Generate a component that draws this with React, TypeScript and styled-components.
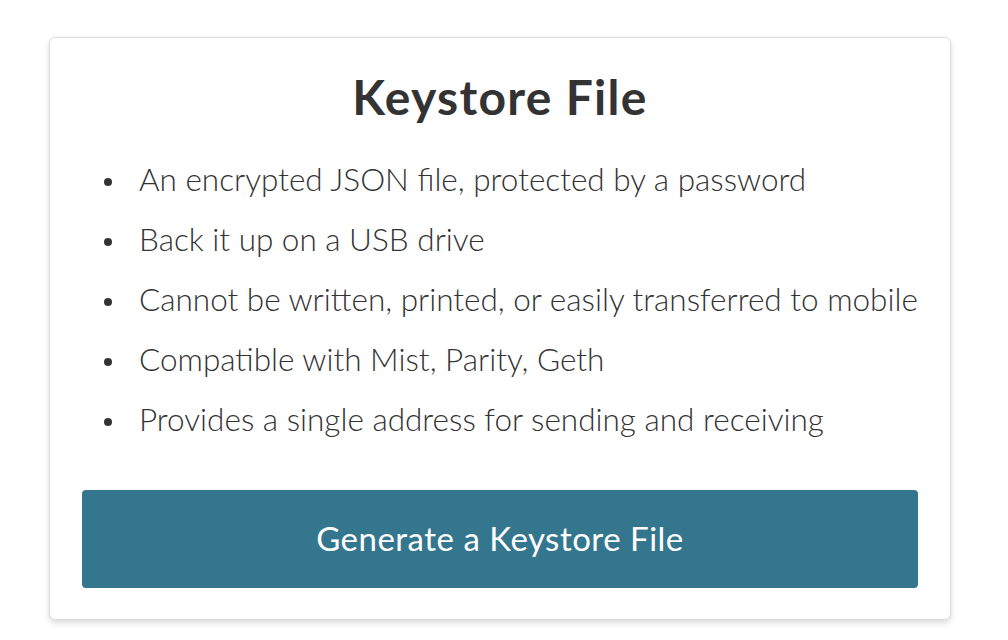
import React from "react";
import styled, { createGlobalStyle } from "styled-components";

const GlobalStyle = createGlobalStyle`
  html, body { margin: 0; padding: 0; background: #ffffff; }
  body { font-family: Lato, "Open Sans", sans-serif; color: #333333; }
`;

const Page = styled.div`
  padding: 37px 57px 20px 49px;
`;

const Card = styled.section`
  box-sizing: border-box;
  width: 902px;
  border: 1px solid #dcdcdc;
  border-radius: 6px;
  background: #ffffff;
  box-shadow: 0 3px 6px rgba(0, 0, 0, 0.14);
  padding: 29px 32px 31px 32px;
`;

const Title = styled.h2`
  margin: 0;
  text-align: center;
  font-family: Lato, sans-serif;
  font-weight: 700;
  font-size: 48px;
  letter-spacing: 1.3px;
  line-height: 60px;
  color: #333333;
`;

const List = styled.ul`
  list-style: none;
  margin: 22px 0 0 0;
  padding: 0 0 0 57px;
`;

const Item = styled.li`
  position: relative;
  font-family: Lato, sans-serif;
  font-weight: 300;
  font-size: 31.5px;
  line-height: 60px;
  color: #333333;
  &::before {
    content: "";
    position: absolute;
    left: -35px;
    top: 29px;
    width: 8px;
    height: 8px;
    border-radius: 50%;
    background: #333333;
  }
`;

const Button = styled.button`
  display: block;
  box-sizing: border-box;
  width: 100%;
  height: 98px;
  margin-top: 41px;
  padding: 0 0 3px 0;
  border: none;
  border-radius: 4px;
  background: #35768f;
  color: #ffffff;
  font-family: Lato, sans-serif;
  font-weight: 400;
  font-size: 33px;
  letter-spacing: 0.5px;
  cursor: pointer;
`;

const items = [
  "An encrypted JSON file, protected by a password",
  "Back it up on a USB drive",
  "Cannot be written, printed, or easily transferred to mobile",
  "Compatible with Mist, Parity, Geth",
  "Provides a single address for sending and receiving",
];

export default function App() {
  return (
    <>
      <GlobalStyle />
      <Page>
        <Card>
          <Title>Keystore File</Title>
          <List>
            {items.map((t) => (
              <Item key={t}>{t}</Item>
            ))}
          </List>
          <Button>Generate a Keystore File</Button>
        </Card>
      </Page>
    </>
  );
}
